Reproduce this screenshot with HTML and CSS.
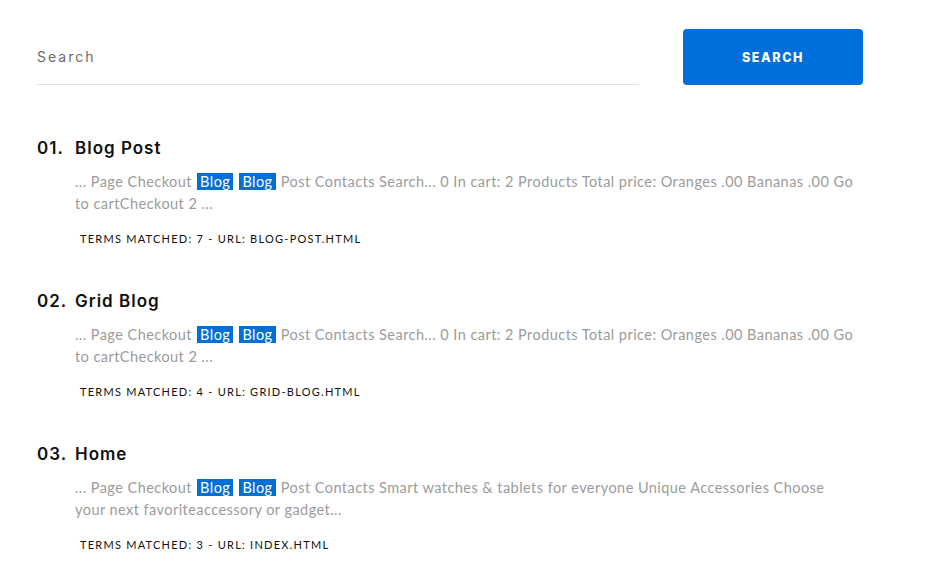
FILE: index.html
```html
<!DOCTYPE html>
<html>
<head>
<meta charset="utf-8">
<link rel="stylesheet" href="styles.css">
</head>
<body>
<div class="page">
  <form class="search-form">
    <div class="field"><span class="placeholder">Search</span></div>
    <button class="btn" type="button">SEARCH</button>
  </form>
  <ol class="results">
    <li class="result">
      <h4 class="title"><span class="num">01.</span><span>Blog Post</span></h4>
      <p class="excerpt">... Page Checkout <mark>Blog</mark> <mark>Blog</mark> Post Contacts Search... 0 In cart: 2 Products Total price: Oranges .00 Bananas .00 Go to cartCheckout 2 ...</p>
      <p class="meta">Terms matched: 7 - URL: blog-post.html</p>
    </li>
    <li class="result">
      <h4 class="title"><span class="num">02.</span><span>Grid Blog</span></h4>
      <p class="excerpt">... Page Checkout <mark>Blog</mark> <mark>Blog</mark> Post Contacts Search... 0 In cart: 2 Products Total price: Oranges .00 Bananas .00 Go to cartCheckout 2 ...</p>
      <p class="meta">Terms matched: 4 - URL: grid-blog.html</p>
    </li>
    <li class="result">
      <h4 class="title"><span class="num">03.</span><span>Home</span></h4>
      <p class="excerpt">... Page Checkout <mark>Blog</mark> <mark>Blog</mark> Post Contacts Smart watches &amp; tablets for everyone Unique Accessories Choose your next favoriteaccessory or gadget...</p>
      <p class="meta">Terms matched: 3 - URL: index.html</p>
    </li>
  </ol>
</div>
</body>
</html>
```
FILE: styles.css
```css
html, body { margin: 0; padding: 0; background: #fff; }
.page { padding: 29px 0 0 37px; width: 826px; font-family: "Lato", "Liberation Sans", sans-serif; }
.search-form { display: flex; gap: 44px; margin: 0; }
.field { width: 602px; height: 56px; border-bottom: 1px solid #e2e2e2; box-sizing: border-box; display: flex; align-items: center; }
.placeholder { font-family: "Inter", "Noto Sans", sans-serif; font-size: 14px; letter-spacing: 2px; color: #6b6b6b; }
.btn { width: 180px; height: 56px; border: none; border-radius: 4px; background: #006fdc; color: #fff; font-family: "Inter", "Noto Sans", sans-serif; font-weight: 800; font-size: 12.5px; letter-spacing: 1.6px; padding: 0; }
.results { list-style: none; margin: 51px 0 0 0; padding: 0; }
.result { margin-bottom: 42px; }
.title { margin: 0; display: flex; font-family: "Inter", "Noto Sans", sans-serif; font-weight: 600; font-size: 17px; line-height: 24px; color: #111; letter-spacing: 1px; }
.num { width: 38px; }
.excerpt { margin: 11px 6px 0 38px; font-size: 14.5px; line-height: 22px; color: #9b9b9b; letter-spacing: 0.45px; }
mark { background: #0070d6; color: #fff; padding: 0 3px; margin: 0 1px; }
.meta { margin: 16px 0 0 43px; font-size: 11px; line-height: 16px; text-transform: uppercase; letter-spacing: 1.25px; color: #111; }
```
